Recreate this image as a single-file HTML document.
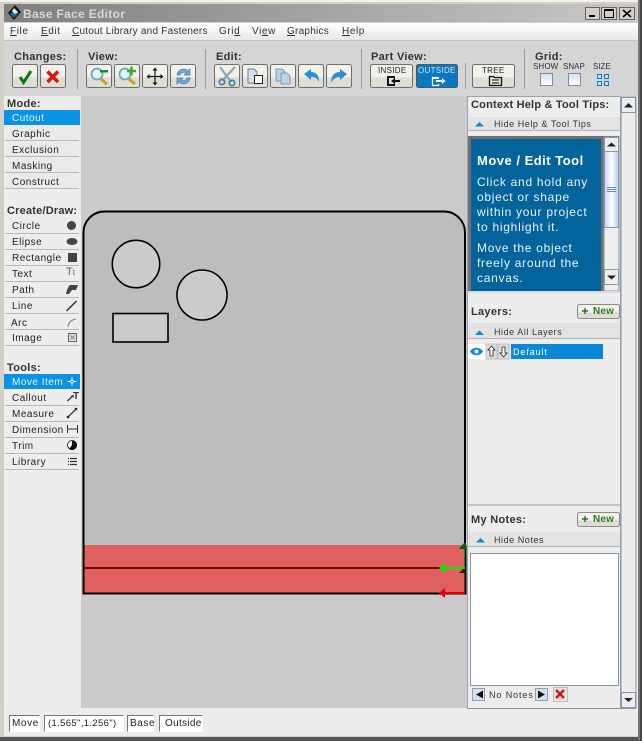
<!DOCTYPE html>
<html><head><meta charset="utf-8">
<style>
html,body{margin:0;padding:0;width:642px;height:741px;overflow:hidden;background:#d4d0c8}
body{position:relative;font-family:"Liberation Sans",sans-serif;font-size:10px;color:#222}
.t{position:absolute;white-space:nowrap;line-height:12px;letter-spacing:.6px}
.b{font-weight:bold;font-size:11px;color:#333;letter-spacing:.3px}
.r{position:absolute}
svg{position:absolute;left:0;top:0}
u{text-decoration:underline}
.m{color:#333;letter-spacing:.6px;top:26px}
.i{color:#222;letter-spacing:.5px;left:12px}
.s{position:absolute;background:#fff;border:1px solid;border-color:#777 #fff #fff #777;height:15px;line-height:15px;font-size:10px;top:715px;color:#222;letter-spacing:.6px;padding-left:2px;box-sizing:content-box}
</style></head><body>
<div class="r" style="left:0;top:0;width:642px;height:2px;background:#f4f2ea"></div>
<div class="r" style="left:4px;top:4px;width:634px;height:18px;background:linear-gradient(90deg,#7f7f7f,#c9c9c9)"></div>
<div class="r" style="left:4px;top:23px;width:634px;height:17px;background:linear-gradient(#fff,#e8e8e8)"></div>
<div class="r" style="left:4px;top:40px;width:634px;height:56px;background:#d5d5d5;border-top:1px solid #c0c0c0;box-sizing:border-box"></div>
<div class="r" style="left:4px;top:96px;width:634px;height:612px;background:#ededed"></div>
<div class="r" style="left:81px;top:96px;width:386px;height:613px;background:#cbcbcb"></div>
<div class="r" style="left:4px;top:708px;width:634px;height:28px;background:#ececec"></div>
<div class="r" style="left:0;top:737px;width:642px;height:4px;background:#555"></div>
<div class="r" style="left:638px;top:0;width:2px;height:741px;background:#777"></div>
<div class="r" style="left:640px;top:0;width:2px;height:741px;background:#444"></div>

<svg width="642" height="741" viewBox="0 0 642 741">
<defs>
<linearGradient id="btn" x1="0" y1="0" x2="0" y2="1"><stop offset="0" stop-color="#f2f2ea"/><stop offset=".55" stop-color="#f2f2ea"/><stop offset=".56" stop-color="#deded6"/><stop offset="1" stop-color="#deded6"/></linearGradient>
<linearGradient id="sb" x1="0" y1="0" x2="1" y2="0"><stop offset="0" stop-color="#c5d3ee"/><stop offset=".5" stop-color="#fff"/><stop offset="1" stop-color="#bccbe8"/></linearGradient>
<linearGradient id="box" x1="0" y1="0" x2="0" y2="1"><stop offset="0" stop-color="#d6e0ee"/><stop offset="1" stop-color="#fff"/></linearGradient>
</defs>
<!-- logo -->
<path d="M8 13 L15 5 L21 12 L14 20Z" fill="#111"/><path d="M10 14 L14 18 L19 13 L15 10Z" fill="#1a6ea8"/><path d="M14 8l4 4-3 2-3-3z" fill="#e8e8e8"/>
<!-- window buttons -->
<g stroke="#666" fill="#d4d0c8"><rect x="585.500" y="7.500" width="14" height="12"/><rect x="601.500" y="7.500" width="15" height="12"/><rect x="619.500" y="7.500" width="15" height="12"/></g>
<rect x="589" y="15" width="6" height="2" fill="#000"/><rect x="604.500" y="9.500" width="9" height="8" fill="none" stroke="#000"/><rect x="604" y="9" width="10" height="2" fill="#000"/>
<path d="M623 10l8 7m0-7l-8 7" stroke="#000" stroke-width="1.500"/>
<!-- separators -->
<g fill="#9a9a9a"><rect x="77" y="49" width="1" height="40"/><rect x="205" y="49" width="1" height="40"/><rect x="361" y="49" width="1" height="40"/><rect x="465" y="63" width="1" height="26"/><rect x="524" y="49" width="1" height="40"/></g>
<!-- buttons -->
<g fill="url(#btn)" stroke="#6f6f6f">
<rect x="12.500" y="64.500" width="25" height="23" rx="2"/><rect x="40.500" y="64.500" width="25" height="23" rx="2"/>
<rect x="86.500" y="64.500" width="25" height="23" rx="2"/><rect x="114.500" y="64.500" width="25" height="23" rx="2"/><rect x="142.500" y="64.500" width="25" height="23" rx="2"/><rect x="170.500" y="64.500" width="25" height="23" rx="2"/>
<rect x="214.500" y="64.500" width="25" height="23" rx="2"/><rect x="242.500" y="64.500" width="25" height="23" rx="2"/><rect x="270.500" y="64.500" width="25" height="23" rx="2"/><rect x="298.500" y="64.500" width="25" height="23" rx="2"/><rect x="326.500" y="64.500" width="25" height="23" rx="2"/>
<rect x="370.500" y="64.500" width="42" height="23" rx="2"/><rect x="472.500" y="64.500" width="42" height="23" rx="2"/>
</g>
<rect x="416.500" y="64.500" width="41" height="23" rx="2" fill="#0a7ac0" stroke="#555"/>
<!-- check, x -->
<path d="M20 77l3.500 5.500L31 71" fill="none" stroke="#0b7a1e" stroke-width="3"/>
<path d="M47.500 71.500l10.500 10.500m0-10.500l-10.500 10.500" stroke="#d81818" stroke-width="3.500"/>
<!-- zoom -->
<circle cx="97" cy="74" r="5.500" fill="#e4f2fa" stroke="#6fa6bc" stroke-width="1.800"/><path d="M101 79l6 5" stroke="#c8a020" stroke-width="3"/><rect x="100" y="70" width="8" height="2.500" fill="#1f8a1f"/>
<circle cx="125" cy="74" r="5.500" fill="#e4f2fa" stroke="#6fa6bc" stroke-width="1.800"/><path d="M129 79l6 5" stroke="#c8a020" stroke-width="3"/><path d="M127 71h9M131.500 66.500v9" stroke="#35b035" stroke-width="2.500"/>
<!-- move -->
<path d="M155 70v13M148.500 76.500h13" stroke="#111" stroke-width="1.200"/><path d="M155 67.500l-2.500 3h5zM155 85.500l-2.500-3h5zM146.500 76.500l3-2.500v5zM163.500 76.500l-3-2.500v5z" fill="#111"/>
<!-- refresh -->
<path d="M177 75a6.500 6.500 0 0 1 11-4l2-2v6h-6l2-2a4 4 0 0 0-6 2z" fill="#6aa6d6" stroke="#4a80b0" stroke-width=".7"/><path d="M190 78a6.500 6.500 0 0 1-11 4l-2 2v-6h6l-2 2a4 4 0 0 0 6-2z" fill="#6aa6d6" stroke="#4a80b0" stroke-width=".7"/>
<!-- scissors -->
<path d="M220 67l11 15M235 67l-13 14" stroke="#8aa6bc" stroke-width="2.200"/><circle cx="222" cy="82" r="2.700" fill="none" stroke="#4f7ea8" stroke-width="1.800"/><circle cx="232" cy="83" r="2.700" fill="none" stroke="#4f7ea8" stroke-width="1.800"/>
<!-- copy-->
<path d="M248 83V69h6l3 3v11z" fill="#d6e2f0" stroke="#5a7ea8"/><rect x="254.500" y="75.500" width="8" height="8" fill="#fff" stroke="#222"/>
<path d="M276 81V69h6l3 3v9z" fill="#bcd0e6" stroke="#7a9cc0"/><path d="M281 84V73h6l3 3v8z" fill="#bcd0e6" stroke="#7a9cc0"/>
<!-- undo/redo -->
<path d="M304 74l7-5v3c5 0 8 3 8 10-2-4-4-5-8-5v3z" fill="#2b8fd6"/>
<path d="M347 74l-7-5v3c-6 0-9 4-9 11 2-4 5-6 9-6v3z" fill="#2b8fd6"/>
<!-- inside/outside/tree icons -->
<path d="M387 76h8v10h-8z" fill="#111"/><path d="M389 78h5v6h-5z" fill="#e6e6de"/><path d="M400 80v2h-5v2l-4-3 4-3v2z" fill="#111"/>
<path d="M437 77.500h-4.500v8h6v-1.500" fill="none" stroke="#fff" stroke-width="1.300"/><path d="M433 77h6v2h-6z" fill="#fff"/><path d="M436 80h6v-2l3.500 3-3.500 3v-2h-6z" fill="#fff"/>
<path d="M489.500 76.500h4l1 1h7v8h-12z" fill="none" stroke="#111" stroke-width="1.300"/><path d="M492 80h7M492 83h7" stroke="#111"/>
<!-- grid boxes -->
<rect x="540.500" y="73.500" width="12" height="12" fill="url(#box)" stroke="#7a8da8"/><rect x="568.500" y="73.500" width="12" height="12" fill="url(#box)" stroke="#7a8da8"/>
<g fill="none" stroke="#0a80d0"><rect x="597.500" y="74.500" width="4" height="4"/><rect x="604.500" y="74.500" width="4" height="4"/><rect x="597.500" y="81.500" width="4" height="4"/><rect x="604.500" y="81.500" width="4" height="4"/></g>

<!-- left panel item rows -->
<g fill="#eaeaea">
<rect x="4" y="110" width="76" height="15" fill="#0a92e4"/>
<rect x="4" y="126" width="76" height="14"/><rect x="4" y="142" width="76" height="14"/><rect x="4" y="158" width="76" height="14"/><rect x="4" y="174" width="76" height="14"/>
</g>
<g fill="#b8b8b8"><rect x="5" y="140" width="74" height="1"/><rect x="5" y="156" width="74" height="1"/><rect x="5" y="172" width="74" height="1"/><rect x="5" y="188" width="74" height="1"/>
<rect x="5" y="233" width="74" height="1"/><rect x="5" y="249" width="74" height="1"/><rect x="5" y="265" width="74" height="1"/><rect x="5" y="281" width="74" height="1"/><rect x="5" y="297" width="74" height="1"/><rect x="5" y="313" width="74" height="1"/><rect x="5" y="329" width="74" height="1"/><rect x="5" y="345" width="74" height="1"/>
<rect x="5" y="405" width="74" height="1"/><rect x="5" y="421" width="74" height="1"/><rect x="5" y="437" width="74" height="1"/><rect x="5" y="453" width="74" height="1"/><rect x="5" y="469" width="74" height="1"/></g>
<rect x="4" y="374" width="76" height="15" fill="#0a92e4"/>
<!-- left icons -->
<circle cx="71.500" cy="225.500" r="4.500" fill="#444"/><ellipse cx="72" cy="241.500" rx="5.500" ry="3.500" fill="#444"/><rect x="68" y="253" width="9" height="9" fill="#444"/>
<path d="M70 285h8l-2 5h-4l-3 4h-3c1-4 2-7 4-9z" fill="#444"/><path d="M66.500 311l10-10" stroke="#333" stroke-width="1.500"/><path d="M68 327c0-4 3-7 8-8" fill="none" stroke="#777"/>
<rect x="68.500" y="333.500" width="8" height="8" fill="#ddd" stroke="#666"/><path d="M70.500 335.500l4 4m0-4l-4 4" stroke="#888"/>
<path d="M72 377v9M67.500 381.500h9" stroke="#d8ecfa" stroke-width="1"/><circle cx="72" cy="381.500" r="1.500" fill="#0a92e4" stroke="#d8ecfa"/>
<path d="M67.500 401l5-5" stroke="#333" stroke-width="1.300"/><path d="M74 395l-3 .5 2.500 2.500z" fill="#333"/>
<path d="M68 417l8-8" stroke="#222" stroke-width="1.200"/><circle cx="68" cy="417" r="1.300" fill="#222"/><circle cx="76" cy="409" r="1.300" fill="#222"/>
<path d="M67.500 425v8M77.500 425v8M68 429h9" stroke="#333"/>
<circle cx="72" cy="445" r="4.500" fill="#fff" stroke="#333"/><path d="M72 445h5a5 5 0 0 1-8 4z" fill="#111"/><path d="M72 445v-4a4 4 0 0 1 5 4z" fill="#111"/>
<g stroke="#333"><path d="M70 458.500h7M70 461.500h7M70 464.500h7" stroke-width="1.300"/><path d="M68 458.500h1M68 461.500h1M68 464.500h1" stroke-width="1.300"/></g>

<!-- part -->
<path d="M83.500 593V233a21 21 0 0 1 21-21.500H444a21 21 0 0 1 21 21.500V593z" fill="#bdbdbd" stroke="#000" stroke-width="2"/>
<rect x="84" y="545" width="381" height="48" fill="#e05f5f"/>
<path d="M83.500 545v48.500H465.500V545" fill="none" stroke="#000" stroke-width="2"/>
<rect x="84" y="567" width="358" height="2" fill="#6c0808"/>
<circle cx="136" cy="264" r="23.700" fill="#cbcbcb" stroke="#000" stroke-width="1.600"/>
<circle cx="202" cy="295" r="25" fill="#cbcbcb" stroke="#000" stroke-width="1.600"/>
<rect x="113" y="313.500" width="55" height="28.500" fill="#cbcbcb" stroke="#000" stroke-width="1.600"/>
<!-- arrows -->
<rect x="464" y="545" width="1" height="24" fill="#0c8c0c"/>
<path d="M459 549l5-6h2v6z" fill="#0b5c0b"/>
<path d="M459 573l5-5h2v5z" fill="#4a0606"/>
<rect x="444" y="567" width="21" height="2" fill="#00ee00"/><path d="M439 568l6-5v10z" fill="#00ee00"/>
<rect x="444" y="592" width="21" height="2" fill="#ee0000"/><path d="M439 593l6-5v10z" fill="#ee0000"/>

<!-- right panel -->
<rect x="467.500" y="96.500" width="153" height="612" fill="none" stroke="#9aa4b0"/>
<rect x="468" y="117" width="152" height="14" fill="#e3e3e3"/><rect x="468" y="130" width="152" height="1" fill="#b5b5b5"/>
<path d="M475 126.500l4.500-4.500 4.500 4.500z" fill="#0a88d8"/>
<rect x="468" y="136" width="151" height="155" fill="#707070"/>
<rect x="471" y="139" width="130" height="152" fill="#03649c"/>
<rect x="604" y="137" width="15" height="154" fill="#eeeeee" stroke="#8a97a8"/>
<rect x="604.500" y="137.500" width="14" height="14" fill="#eee" stroke="#8a97a8"/><path d="M607 146.500l4.500-4 4.500 4z" fill="#222"/>
<rect x="604.500" y="151.500" width="14" height="76" fill="url(#sb)" stroke="#7e96c4"/><path d="M607 187.500h9M607 189.500h9M607 191.500h9" stroke="#6a85bc"/>
<rect x="604.500" y="269.500" width="14" height="15" fill="#eee" stroke="#8a97a8"/><path d="M607 275.500l4.500 4 4.500-4z" fill="#222"/>
<rect x="468" y="291" width="152" height="2" fill="#dcdcdc"/>
<rect x="468" y="323" width="152" height="16" fill="#e3e3e3"/><rect x="468" y="338" width="152" height="1" fill="#b5b5b5"/>
<path d="M475 335l4.500-4.500 4.500 4.500z" fill="#0a88d8"/>
<rect x="468" y="344" width="18" height="15" fill="#fff"/>
<path d="M470 351.500c3-5 10-5 13 0-3 5-10 5-13 0z" fill="#0a88d8"/><circle cx="476.500" cy="351.500" r="2" fill="#fff"/>
<rect x="486" y="344" width="11" height="15" fill="#ddd" stroke="#999" stroke-width=".5"/><rect x="498" y="344" width="11" height="15" fill="#ddd" stroke="#999" stroke-width=".5"/>
<path d="M491.500 346l-3.500 4h2v6h3v-6h2z" fill="#fff" stroke="#222" stroke-width=".8"/><path d="M503.500 357l-3.500-4h2v-6h3v6h2z" fill="#fff" stroke="#222" stroke-width=".8"/>
<rect x="511" y="344" width="92" height="15" fill="#0a88d8"/>
<rect x="468" y="504" width="152" height="2" fill="#c8c8c8"/>
<rect x="468" y="532" width="152" height="15" fill="#e3e3e3"/><rect x="468" y="546" width="152" height="1" fill="#b5b5b5"/>
<path d="M476 542.500l4.500-4.500 4.500 4.500z" fill="#0a88d8"/>
<rect x="470.500" y="553.500" width="148" height="132" fill="#fff" stroke="#8896a8"/>
<rect x="577.500" y="304.500" width="42" height="14" rx="2" fill="url(#btn)" stroke="#8a8a80"/>
<rect x="577.500" y="512.500" width="42" height="14" rx="2" fill="url(#btn)" stroke="#8a8a80"/>
<path d="M585 308v6M582 311h6" stroke="#1f7a1f" stroke-width="1.500"/><path d="M585 516v6M582 519h6" stroke="#1f7a1f" stroke-width="1.500"/>
<!-- notes nav -->
<rect x="472.500" y="688.500" width="12" height="12" fill="#d4e2f0" stroke="#99a"/><path d="M483 690.500v8l-7-4z" fill="#111"/>
<rect x="535.500" y="688.500" width="12" height="12" fill="#d4e2f0" stroke="#99a"/><path d="M538 690.500v8l7-4z" fill="#111"/>
<rect x="553.500" y="687.500" width="14" height="14" fill="#e6e6e6" stroke="#bbb"/><path d="M556 690l8 8m0-8l-8 8" stroke="#dd1010" stroke-width="2.500"/>
<!-- outer scrollbar -->
<rect x="621" y="97" width="15" height="611" fill="#ededed" stroke="#8a97a8"/>
<rect x="621.500" y="97.500" width="14" height="15" fill="#eee" stroke="#8a97a8"/><path d="M624 107.500l4.500-4.500 4.500 4.500z" fill="#222"/>
<rect x="621.500" y="692.500" width="14" height="15" fill="#eee" stroke="#8a97a8"/><path d="M624 698l4.500 4 4.500-4z" fill="#222"/>
<rect x="467" y="708" width="169" height="1" fill="#8a97a8"/>
</svg>

<div class="t" style="left:23px;top:8px;font-size:12px;font-weight:bold;color:#d8d8d8;letter-spacing:.3px">Base Face Editor</div>
<div class="t m" style="left:10px"><u>F</u>ile</div>
<div class="t m" style="left:41px"><u>E</u>dit</div>
<div class="t m" style="left:72px;letter-spacing:.22px"><u>C</u>utout Library and Fasteners</div>
<div class="t m" style="left:219px">Gri<u>d</u></div>
<div class="t m" style="left:252px">Vi<u>e</u>w</div>
<div class="t m" style="left:287px;letter-spacing:.25px"><u>G</u>raphics</div>
<div class="t m" style="left:342px"><u>H</u>elp</div>

<div class="t b" style="left:14px;top:51px">Changes:</div>
<div class="t b" style="left:88px;top:51px">View:</div>
<div class="t b" style="left:216px;top:51px">Edit:</div>
<div class="t b" style="left:371px;top:51px">Part View:</div>
<div class="t b" style="left:535px;top:51px">Grid:</div>
<div class="t" style="left:378px;top:65px;font-size:8px;letter-spacing:.3px;color:#222">INSIDE</div>
<div class="t" style="left:418px;top:65px;font-size:8px;letter-spacing:.3px;color:#cfe6f6">OUTSIDE</div>
<div class="t" style="left:482px;top:65px;font-size:8px;letter-spacing:.3px;color:#222">TREE</div>
<div class="t" style="left:533px;top:61px;font-size:8px;letter-spacing:.1px;color:#333">SHOW</div>
<div class="t" style="left:563px;top:61px;font-size:8px;letter-spacing:0;color:#333">SNAP</div>
<div class="t" style="left:593px;top:61px;font-size:8px;letter-spacing:0;color:#333">SIZE</div>

<div class="t b" style="left:7px;top:98px">Mode:</div>
<div class="t i" style="top:113px;color:#e8f4fc">Cutout</div>
<div class="t i" style="top:129px">Graphic</div>
<div class="t i" style="top:145px">Exclusion</div>
<div class="t i" style="top:161px">Masking</div>
<div class="t i" style="top:177px">Construct</div>
<div class="t b" style="left:7px;top:205px;letter-spacing:.2px">Create/Draw:</div>
<div class="t i" style="top:221px">Circle</div>
<div class="t i" style="top:237px">Elipse</div>
<div class="t i" style="top:253px">Rectangle</div>
<div class="t i" style="top:269px">Text</div>
<div class="t i" style="top:285px">Path</div>
<div class="t i" style="top:301px">Line</div>
<div class="t i" style="top:318px;left:11px">Arc</div>
<div class="t i" style="top:333px">Image</div>
<div class="t" style="left:66px;top:266px;font-size:11px;color:#666;letter-spacing:0">T<span style="font-size:8px">t</span></div>
<div class="t b" style="left:7px;top:362px">Tools:</div>
<div class="t i" style="top:377px;color:#e8f4fc">Move Item</div>
<div class="t i" style="top:393px">Callout</div>
<div class="t" style="left:73px;top:391px;font-size:10px;font-weight:bold;color:#333;letter-spacing:0">T</div>
<div class="t i" style="top:409px">Measure</div>
<div class="t i" style="top:425px">Dimension</div>
<div class="t i" style="top:441px">Trim</div>
<div class="t i" style="top:457px">Library</div>

<div class="t b" style="left:471px;top:99px;letter-spacing:.2px">Context Help &amp; Tool Tips:</div>
<div class="t" style="left:494px;top:118px;font-size:9px;color:#333;letter-spacing:.55px">Hide Help &amp; Tool Tips</div>
<div class="t" style="left:477px;top:153px;font-size:13px;font-weight:bold;color:#fff;letter-spacing:.5px;line-height:15px">Move / Edit Tool</div>
<div class="t" style="left:477px;top:175px;font-size:12px;color:#e8f2f8;line-height:15px;letter-spacing:.72px">Click and hold any<br>object or shape<br>within your project<br>to highlight it.</div>
<div class="t" style="left:477px;top:241px;font-size:12px;color:#e8f2f8;line-height:15px;letter-spacing:.72px">Move the object<br>freely around the<br>canvas.</div>
<div class="t b" style="left:471px;top:306px">Layers:</div>
<div class="t" style="left:593px;top:306px;font-weight:bold;font-size:10px;color:#2a7a2a;letter-spacing:.2px">New</div>
<div class="t" style="left:494px;top:326px;font-size:9px;color:#333;letter-spacing:.55px">Hide All Layers</div>
<div class="t" style="left:513px;top:346px;font-size:9px;color:#fff;letter-spacing:.9px">Default</div>
<div class="t b" style="left:471px;top:514px">My Notes:</div>
<div class="t" style="left:593px;top:514px;font-weight:bold;font-size:10px;color:#2a7a2a;letter-spacing:.2px">New</div>
<div class="t" style="left:494px;top:534px;font-size:9px;color:#333;letter-spacing:.55px">Hide Notes</div>
<div class="t" style="left:489px;top:689px;font-size:9px;color:#333;letter-spacing:.9px">No Notes</div>

<div class="s" style="left:9px;width:27px">Move</div>
<div class="s" style="left:44px;width:75px;padding-left:3px;font-size:9.500px;letter-spacing:.35px">(1.565",1.256")</div>
<div class="s" style="left:127px;width:23px">Base</div>
<div class="s" style="left:159px;width:37px;padding-left:5px;letter-spacing:.3px">Outside</div>
</body></html>
